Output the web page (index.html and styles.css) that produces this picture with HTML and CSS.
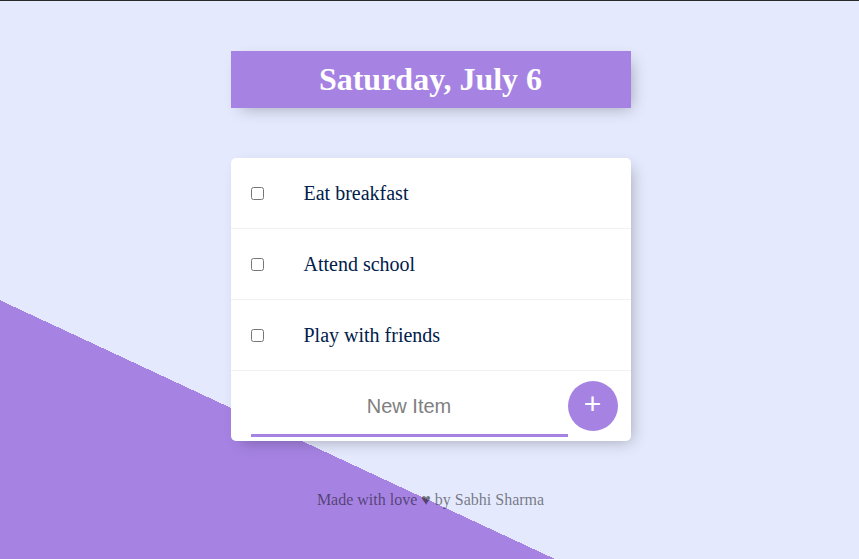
FILE: index.html
```html
<!DOCTYPE html>
<html lang="en">
<head>
<meta charset="utf-8">
<title>To Do List</title>
<link rel="stylesheet" href="styles.css">
</head>
<body>
<div class="box heading"><h1>Saturday, July 6</h1></div>
<div class="box list">
  <div class="item"><input type="checkbox"><p>Eat breakfast</p></div>
  <div class="item"><input type="checkbox"><p>Attend school</p></div>
  <div class="item"><input type="checkbox"><p>Play with friends</p></div>
  <form class="item">
    <input type="text" placeholder="New Item" autocomplete="off">
    <button type="button">+</button>
  </form>
</div>
<footer>Made with love ♥ by Sabhi Sharma</footer>
</body>
</html>
```
FILE: styles.css
```css
html {
  height: 559px;
  overflow: hidden;
  background-color: #e4e9fd;
  background-image: -webkit-linear-gradient(65deg, #a683e3 50%, #e4e9fd 50%);
  background-size: 859px 1001px;
  background-repeat: no-repeat;
  font-family: "Liberation Serif", serif;
}
body {
  margin: 0;
  padding-left: 2px;
  box-sizing: border-box;
  height: 559px;
  border-top: 1px solid #292929;
}
.box {
  width: 400px;
  margin: 50px auto;
  background: #fff;
  border-radius: 5px;
  box-shadow: 5px 5px 15px -5px rgba(0, 0, 0, 0.3);
}
.heading {
  box-sizing: border-box;
  height: 57px;
  padding: 10px;
  border-radius: 0;
  background: #a683e3;
  text-align: center;
}
h1 {
  margin: 0;
  color: #fff;
  font-size: 32px;
  line-height: 37px;
}
.list {
  height: 283px;
  margin-bottom: 0;
}
.item {
  display: flex;
  align-items: center;
  height: 70px;
  border-bottom: 1px solid #f1f1f1;
}
.item:last-child {
  border-bottom: 0;
}
input[type="checkbox"] {
  margin: 0 20px;
}
p {
  margin: 0;
  padding: 20px;
  color: #00204a;
  font-size: 20px;
  font-weight: normal;
}
input[type="text"] {
  box-sizing: border-box;
  width: 317px;
  height: 60px;
  margin: 2px 0 0 20px;
  padding: 2px 0 0;
  border: 0;
  border-bottom: 3px solid #a683e3;
  background: transparent;
  text-align: center;
  font: 20px "Liberation Sans", sans-serif;
}
input::placeholder {
  color: #808080;
}
button {
  width: 50px;
  height: 50px;
  padding: 0 0 4px;
  border: 0;
  border-radius: 50%;
  background: #a683e3;
  color: #fff;
  font: 30px "Liberation Sans", sans-serif;
}
footer {
  margin-top: 50px;
  color: rgba(0, 0, 0, 0.5);
  font-size: 16px;
  text-align: center;
}
```
